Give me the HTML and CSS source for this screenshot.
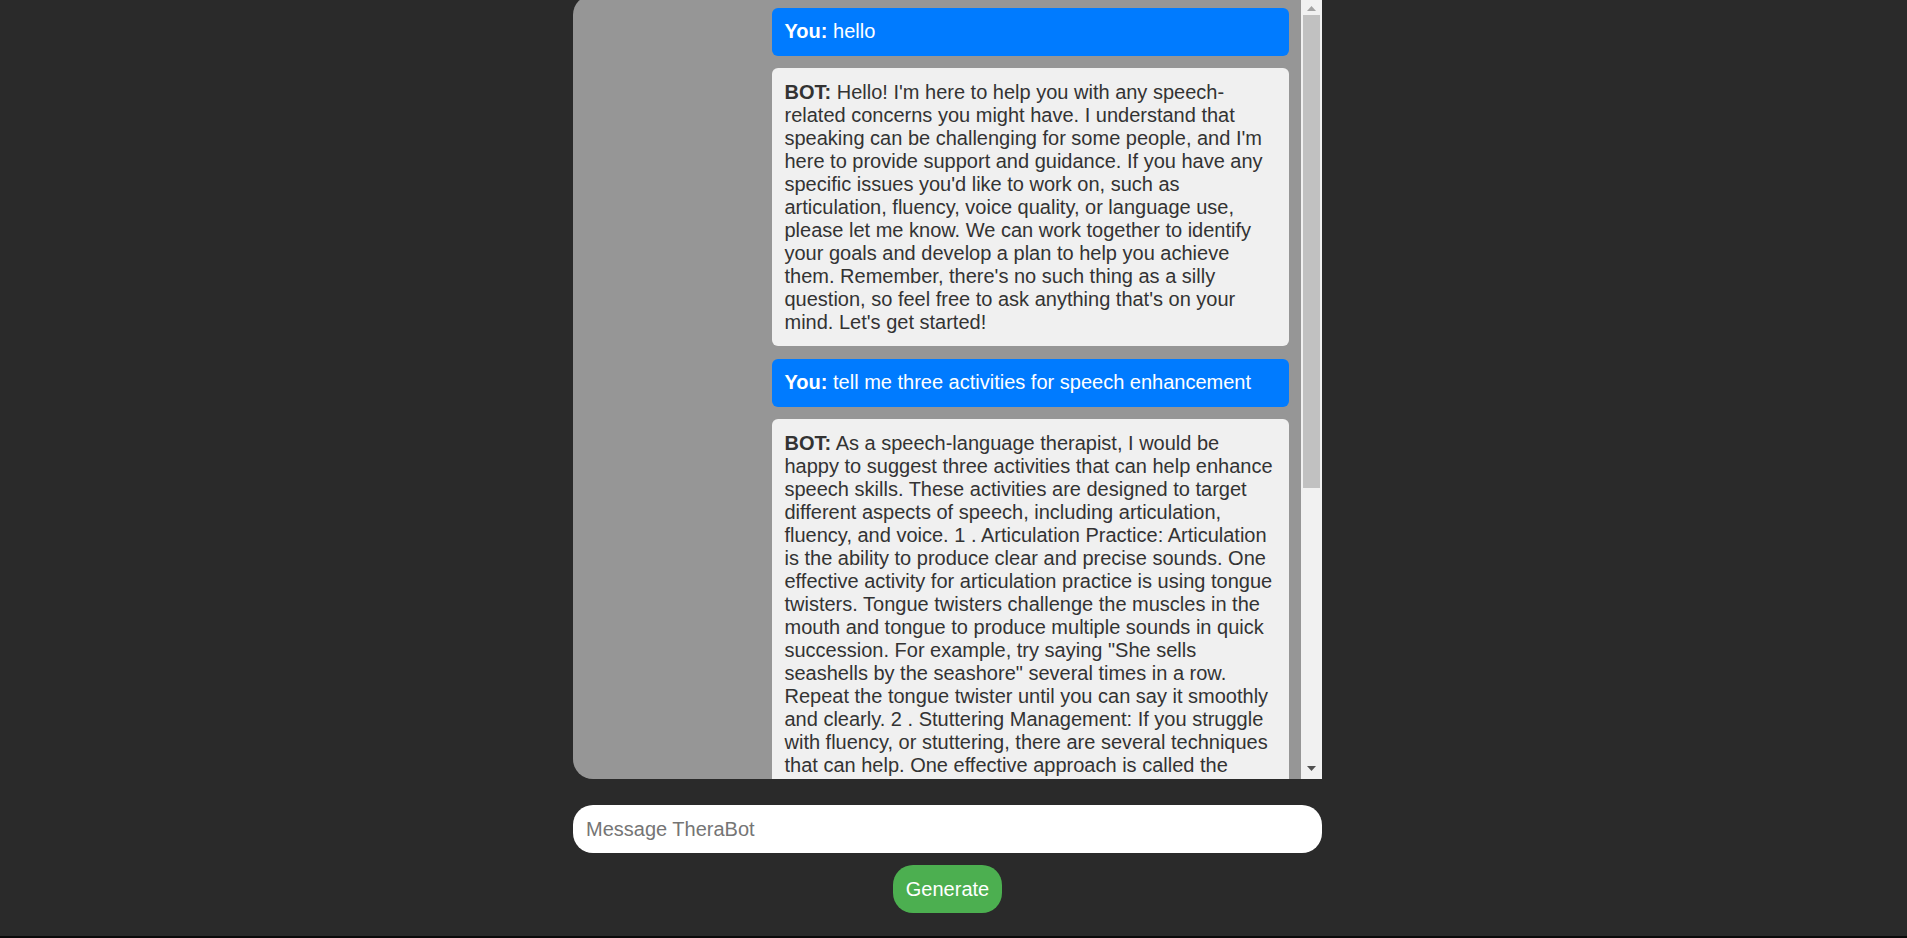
FILE: index.html
```html
<!DOCTYPE html>
<html lang="en">
<head>
<meta charset="utf-8">
<title>TheraBot</title>
<link rel="stylesheet" href="styles.css">
</head>
<body>
<div class="column">
  <div class="chat">
    <div class="messages">
      <div class="msg user"><strong>You:</strong> hello</div>
      <div class="msg bot"><strong>BOT:</strong> Hello! I'm here to help you with any speech-related concerns you might have. I understand that speaking can be challenging for some people, and I'm here to provide support and guidance. If you have any specific issues you'd like to work on, such as articulation, fluency, voice quality, or language use, please let me know. We can work together to identify your goals and develop a plan to help you achieve them. Remember, there's no such thing as a silly question, so feel free to ask anything that's on your mind. Let's get started!</div>
      <div class="msg user"><strong>You:</strong> tell me three activities for speech enhancement</div>
      <div class="msg bot"><strong>BOT:</strong> As a speech-language therapist, I would be happy to suggest three activities that can help enhance speech skills. These activities are designed to target different aspects of speech, including articulation, fluency, and voice. 1 . Articulation Practice: Articulation is the ability to produce clear and precise sounds. One effective activity for articulation practice is using tongue twisters. Tongue twisters challenge the muscles in the mouth and tongue to produce multiple sounds in quick succession. For example, try saying "She sells seashells by the seashore" several times in a row. Repeat the tongue twister until you can say it smoothly and clearly. 2 . Stuttering Management: If you struggle with fluency, or stuttering, there are several techniques that can help. One effective approach is called the "easy onset" technique, which involves starting words gently and smoothly. 3 . Voice Exercises: Humming, lip trills and reading aloud can strengthen your voice.</div>
    </div>
    <div class="scrollbar">
      <div class="sb-btn">
        <svg class="sb-arrow up" width="9" height="5" viewBox="0 0 9 5"><polygon points="0,5 4.5,0 9,5"/></svg>
      </div>
      <div class="sb-thumb"></div>
      <div class="sb-rest"></div>
      <div class="sb-btn">
        <svg class="sb-arrow down" width="9" height="5" viewBox="0 0 9 5"><polygon points="0,0 9,0 4.5,5"/></svg>
      </div>
    </div>
  </div>
  <input class="prompt" type="text" placeholder="Message TheraBot">
  <button class="generate" type="button">Generate</button>
</div>
</body>
</html>
```

FILE: styles.css
```css
html {
  background: #0a0a0a;
}

body {
  margin: 0;
  padding: 0 12px 0 0;
  height: 936px;
  overflow: hidden;
  background: #2a2a2a;
  font-family: "Liberation Sans", Arial, sans-serif;
  font-size: 20px;
  line-height: 23px;
}

.column {
  width: 749px;
  margin: 0 auto;
  display: flex;
  flex-direction: column;
}

.chat {
  margin-top: -5px;
  height: 784px;
  display: flex;
  background: #969696;
  border-radius: 20px 0 0 20px;
  overflow: hidden;
}

.messages {
  flex: 1;
  padding: 12.5px 12px 0 0;
  overflow: hidden;
  display: flex;
  flex-direction: column;
  align-items: flex-end;
  gap: 12.5px;
}

.msg {
  width: 517px;
  box-sizing: border-box;
  padding: 12.5px 12.5px;
  border-radius: 6px;
  flex-shrink: 0;
}

.msg.user {
  background: #007bff;
  color: #ffffff;
}

.msg.bot {
  background: #f0f0f0;
  color: #333333;
}

.scrollbar {
  width: 21px;
  flex-shrink: 0;
  background: #f1f1f1;
  display: flex;
  flex-direction: column;
}

.sb-btn {
  height: 20px;
  display: flex;
  align-items: center;
  justify-content: center;
  flex-shrink: 0;
}

.sb-arrow.up {
  fill: #a3a3a3;
  margin-top: 6px;
}

.sb-arrow.down {
  fill: #505050;
  margin-bottom: 2px;
}

.sb-thumb {
  height: 473px;
  margin: 0 2px;
  background: #c1c1c1;
  flex-shrink: 0;
}

.sb-rest {
  flex: 1;
}

.prompt {
  margin-top: 26px;
  height: 48px;
  box-sizing: border-box;
  width: 100%;
  border: none;
  outline: none;
  border-radius: 20px;
  background: #ffffff;
  padding: 0 13px;
  font-family: "Liberation Sans", Arial, sans-serif;
  font-size: 20px;
  color: #333333;
}

.prompt::placeholder {
  color: #757575;
}

.generate {
  align-self: center;
  margin-top: 12px;
  padding: 12.5px;
  border: none;
  border-radius: 20px;
  background: #4caf50;
  color: #ffffff;
  font-family: "Liberation Sans", Arial, sans-serif;
  font-size: 20px;
  line-height: 23px;
  cursor: pointer;
}
```
